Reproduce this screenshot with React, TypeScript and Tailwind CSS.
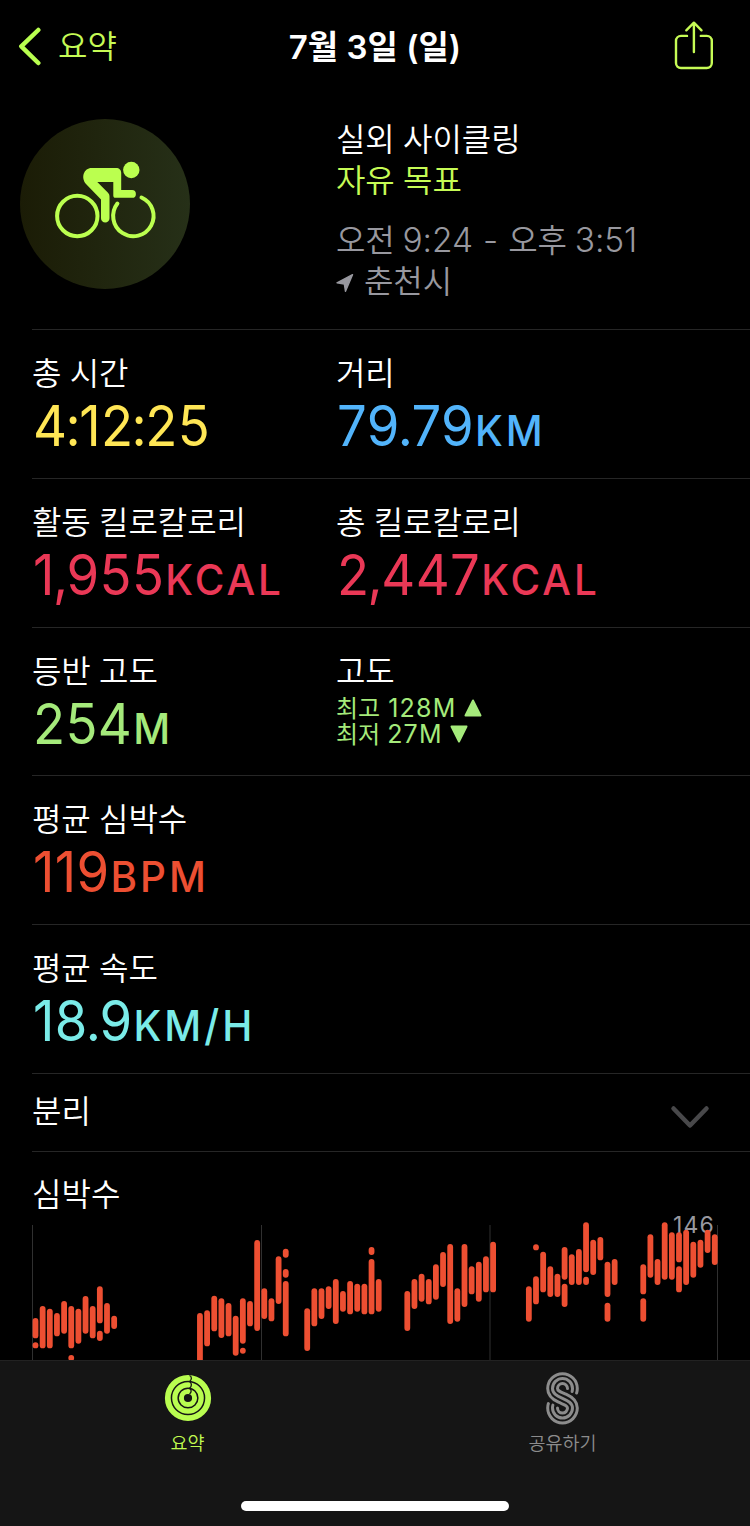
import React from 'react';

interface Metric {
  label: string;
  value: string;
  unit?: string;
  valueClass: string;
}

interface MetricRowProps {
  left: Metric;
  right?: Metric;
  children?: React.ReactNode;
}

// [슬롯 번호, 위쪽 y, 아래쪽 y]
type HeartBar = [number, number, number];

const HEART_BARS: HeartBar[] = [
  [0, 98, 118.3], [0, 122.3, 128.3], [1, 86, 128.3], [2, 88.7, 128.3], [3, 93, 116.3],
  [4, 81, 113.7], [5, 86, 128.3], [5, 135, 141], [6, 88.7, 123.7], [7, 76, 113.7],
  [8, 86, 118.3], [9, 66.3, 103.3], [9, 110.7, 121], [10, 83, 113.7], [11, 95.7, 109],

  [23, 93, 146], [24, 90.3, 126.3], [25, 75.7, 111.3], [26, 78.3, 118], [27, 83, 116.3],
  [28, 95.7, 135.7], [29, 78.3, 123.7], [29, 127.7, 133.7], [30, 81, 106.3], [31, 20, 111],
  [32, 68.3, 99], [33, 78.3, 101.3], [34, 36.3, 84], [35, 28.7, 37.7], [35, 49, 57.7],
  [35, 61, 116.3],

  [38, 88.3, 131], [39, 68.3, 106.3], [40, 68.3, 99], [41, 66.3, 89], [42, 59, 104],
  [43, 71, 91.7], [44, 61, 94.3], [45, 63.7, 91.7], [46, 63.7, 94.3], [47, 27, 35],
  [47, 39, 94.3], [48, 59, 91.7],

  [52, 71, 111], [53, 59, 89], [54, 53.7, 81.7], [55, 59, 84.3], [56, 44.3, 79.7],
  [57, 32, 67], [58, 24, 104], [59, 68.3, 101.7], [60, 24, 87], [61, 46.3, 74.3],
  [62, 41.7, 81.7], [63, 36.3, 72.3], [64, 21.7, 72.3],

  [69, 66.3, 101.7], [70, 24.3, 30.3], [70, 56.3, 84.3], [71, 31.7, 72.3], [72, 46.3, 77],
  [73, 53.7, 77], [74, 27, 59.7], [74, 63.7, 87], [75, 34.3, 65], [76, 29, 65],
  [77, 2.3, 52.3], [77, 56.7, 65], [78, 19.7, 55], [79, 17, 40.3], [80, 41.7, 77],
  [80, 82.7, 101.7], [81, 39, 65],

  [85, 44.3, 74.3], [85, 78.3, 101.7], [86, 14.3, 57.7], [87, 39, 65], [88, 2.3, 59.7],
  [89, 12.3, 59.7], [90, 12.3, 42.3], [90, 46.3, 72.3], [91, 9.7, 65], [92, 21.7, 57.7],
  [93, 19.7, 47.7], [94, 9.7, 33], [95, 14.3, 45],
];

const GRID_LINES = [32.5, 261.5, 490, 717.5];

const CyclingIcon: React.FC = () => (
  <svg className="w-[170px] h-[170px]" viewBox="20 119 170 170" fill="none">
    <circle cx="77.3" cy="216" r="20.2" stroke="#bbff4f" strokeWidth="4" />
    <path
      d="M141.5 197.5A20.2 20.2 0 1 1 117.4 203.6"
      stroke="#bbff4f"
      strokeWidth="4"
      strokeLinecap="round"
    />
    <circle cx="131.3" cy="170" r="8.2" fill="#bbff4f" />
    <path
      d="M91.5 168H116C119.3 168 121.2 170 121.2 173V190H132A3.9 3.9 0 0 1 132 197.8H115.5C114 197.8 113.3 197 113.3 195.5V182H97.3L108 192.8C109.1 194 109.5 195 109.5 196.7V218.3A4.2 4.2 0 0 1 101 218.3V199.5L86 184C80.5 177.5 84 168 91.5 168Z"
      fill="#bbff4f"
    />
  </svg>
);

const ShareIcon: React.FC = () => (
  <svg
    className="w-10 h-[50px]"
    viewBox="673.5 21 40 50"
    fill="none"
    stroke="#c6fb55"
    strokeWidth="2.4"
    strokeLinecap="round"
    strokeLinejoin="round"
  >
    <path d="M686.5 35.9H680.5A5 5 0 0 0 675.5 40.9V63A5 5 0 0 0 680.5 68H706.3A5 5 0 0 0 711.3 63V40.9A5 5 0 0 0 706.3 35.9H700.3" />
    <path d="M693.4 52V23M685.8 30.3L693.4 22.7L701 30.3" />
  </svg>
);

const RingsIcon: React.FC = () => (
  <svg className="w-12 h-12" viewBox="0 0 48 48" fill="none">
    <g stroke="#b9fd50">
      <circle cx="24" cy="24" r="20.2" strokeWidth="5.8" />
      <circle cx="24" cy="24" r="13.2" strokeWidth="5.2" />
      <circle cx="24" cy="24" r="6.6" strokeWidth="5" />
    </g>
    <path
      d="M25.5 1.5C28 2.5 28 6 25.5 7.5C28 9 28 12.5 25.5 14.3C27.7 15.5 27.7 18.5 25.5 20"
      stroke="#151515"
      strokeWidth="1.3"
    />
  </svg>
);

const SharingIcon: React.FC = () => (
  <svg
    className="w-[34px] h-[53px]"
    viewBox="35.5 12 34 53"
    fill="none"
    stroke="#8c8c8c"
    strokeWidth="3"
    strokeLinecap="round"
  >
    <path d="M66.1 33C66.6 31.6 66.8 30 66.8 28.5A14.8 14.8 0 0 0 37.2 28.5C37.2 36 42 39.5 48 42.2C54 44.9 57 45.6 57 48.1A5 5 0 0 1 47 48.1" />
    <path d="M61.6 31.5C61.9 30.5 62 29.5 62 28.5A10 10 0 0 0 42 28.5C42 33.5 46.5 35.8 52 38.3C57.5 40.8 62 43.100 62 48.1A10 10 0 0 1 42 48.100C42 47.1 42.1 46.1 42.4 45.100" />
    <path d="M57 28.5A5 5 0 0 0 47 28.5C47 31 50 31.7 56 34.4C62 37.1 66.8 40.6 66.8 48.1A14.8 14.8 0 0 1 37.200 48.100C37.2 46.6 37.4 45 37.9 43.6" />
  </svg>
);

const MetricLabel: React.FC<{ children: React.ReactNode }> = ({ children }) => (
  <div className="text-[32px] leading-10 font-[350] tracking-[-0.1px] [word-spacing:1.4px]">
    {children}
  </div>
);

const MetricCell: React.FC<{ metric: Metric }> = ({ metric }) => (
  <div>
    <MetricLabel>{metric.label}</MetricLabel>
    <div
      className={`mt-[9px] ml-px origin-left scale-x-94 font-['Inter',sans-serif] text-[56px] leading-[52px] font-normal tracking-[0.4px] whitespace-nowrap ${metric.valueClass}`}
    >
      {/* 구두점은 숫자 사이 간격을 더 좁힌다 */}
      {metric.value.split(/([:.,])/).map((part, i) => (
        <span key={i} className={i % 2 ? '-mx-[2px]' : undefined}>
          {part}
        </span>
      ))}
      {metric.unit && (
        <span className="ml-px text-[43px] font-[450] tracking-[3.2px]">{metric.unit}</span>
      )}
    </div>
  </div>
);

const MetricRow: React.FC<MetricRowProps> = ({ left, right, children }) => (
  <div className="ml-8 h-[148.8px] shrink-0 grid grid-cols-[304px_1fr] border-t border-[#262626] pt-[21px]">
    <MetricCell metric={left} />
    {right && <MetricCell metric={right} />}
    {children}
  </div>
);

const HeartRateChart: React.FC = () => (
  <svg className="block w-full h-[140px] overflow-visible" viewBox="0 0 750 140">
    {GRID_LINES.map((x) => (
      <rect key={x} x={x - 0.5} y="5" width="1" height="135" fill="#303030" />
    ))}
    <text
      x="673"
      y="13"
      fill="#98989f"
      className="font-['Inter',sans-serif] text-[23px] font-normal tracking-[1.2px]"
    >
      146
    </text>
    {HEART_BARS.map(([slot, top, bottom]) => (
      <rect
        key={`${slot}-${top}`}
        x={35.5 + slot * 7.15 - 2.9}
        y={top}
        width="5.8"
        height={bottom - top}
        rx="2.9"
        fill="#ed4f32"
      />
    ))}
  </svg>
);

export default function App() {
  return (
    <div className="w-[750px] h-[1526px] overflow-hidden flex flex-col bg-black text-white font-['Noto_Sans_CJK_KR',sans-serif]">
      {/* 상단 내비게이션 */}
      <header className="h-[92px] shrink-0 grid grid-cols-[1fr_auto_1fr] items-center px-[17px]">
        <button className="flex items-center gap-[17px] text-[#c6fb55]">
          <svg className="w-6 h-10" viewBox="0 0 24 40" fill="none">
            <path
              d="M21.3 4L4.3 20.3L21.3 37"
              stroke="#b9ff4f"
              strokeWidth="4.5"
              strokeLinecap="round"
              strokeLinejoin="round"
            />
          </svg>
          <span className="text-[32px] leading-10 font-[350] -mt-1">요약</span>
        </button>
        <h1 className="mt-0.5 font-['Inter','Noto_Sans_CJK_KR',sans-serif] text-[33px] leading-10 font-semibold">
          7월 3일 (일)
        </h1>
        <button className="justify-self-end mr-[19px]">
          <ShareIcon />
        </button>
      </header>

      {/* 운동 요약 */}
      <section className="h-[237px] shrink-0 grid grid-cols-[316px_1fr] pl-5 pt-[25px]">
        <div className="w-[170px] h-[170px] mt-0.5 rounded-full bg-linear-to-r from-[#1b1c06] to-[#263018]">
          <CyclingIcon />
        </div>
        <div className="text-[32px] leading-[40.5px] font-[350] tracking-[-0.1px] [word-spacing:1.4px]">
          <div>실외 사이클링</div>
          <div className="text-[#c6fb55]">자유 목표</div>
          <div className="mt-5 text-[#98989f] [word-spacing:0.8px]">
            오전 <span className="font-['Inter',sans-serif] text-[33.5px] leading-none">9:24 - </span>
            오후 <span className="font-['Inter',sans-serif] text-[33.5px] leading-none">3:51</span>
          </div>
          <div className="flex items-center gap-[10px] text-[#98989f]">
            <svg className="w-[18px] h-[18px] mt-2" viewBox="337 274 18 18">
              <path
                d="M353.5 274.700L338 282.8L345.3 284L346.5 291.3Z"
                fill="#98989f"
                stroke="#98989f"
                strokeWidth="1.4"
                strokeLinejoin="round"
              />
            </svg>
            춘천시
          </div>
        </div>
      </section>

      <MetricRow
        left={{ label: '총 시간', value: '4:12:25', valueClass: 'text-[#ffe655]' }}
        right={{ label: '거리', value: '79.79', unit: 'KM', valueClass: 'text-[#52b4fb]' }}
      />
      <MetricRow
        left={{ label: '활동 킬로칼로리', value: '1,955', unit: 'KCAL', valueClass: 'text-[#ea3856]' }}
        right={{ label: '총 킬로칼로리', value: '2,447', unit: 'KCAL', valueClass: 'text-[#ea3856]' }}
      />
      <MetricRow left={{ label: '등반 고도', value: '254', unit: 'M', valueClass: 'text-[#a5ea7b]' }}>
        <div>
          <MetricLabel>고도</MetricLabel>
          <div className="mt-1.5 text-[24px] leading-[26px] text-[#a5ea7b]">
            <div className="flex items-center gap-2">
              <span className="-mt-0.5">최고</span>
              <span className="font-['Inter',sans-serif] text-[25px] tracking-[1.2px]">128M</span>
              <svg className="w-[18px] h-[18px]" viewBox="0 0 18 18">
                <path d="M9 1.5L16.5 16.5H1.5Z" fill="#a5ea7b" stroke="#a5ea7b" strokeWidth="2" strokeLinejoin="round" />
              </svg>
            </div>
            <div className="flex items-center gap-[7px]">
              <span className="-mt-0.5">최저</span>
              <span className="font-['Inter',sans-serif] text-[25px] tracking-[1.2px]">27M</span>
              <svg className="w-[18px] h-[18px]" viewBox="0 0 18 18">
                <path d="M9 16.5L16.5 1.5H1.5Z" fill="#a5ea7b" stroke="#a5ea7b" strokeWidth="2" strokeLinejoin="round" />
              </svg>
            </div>
          </div>
        </div>
      </MetricRow>
      <MetricRow left={{ label: '평균 심박수', value: '119', unit: 'BPM', valueClass: 'text-[#ed4f32]' }} />
      <MetricRow left={{ label: '평균 속도', value: '18.9', unit: 'KM/H', valueClass: 'text-[#7aebe8]' }} />

      {/* 분리 */}
      <div className="ml-8 h-[79px] shrink-0 flex items-start justify-between border-y border-[#262626] pr-10">
        <span className="mt-[15px] text-[32px] leading-10 font-[350]">분리</span>
        <svg className="w-10 h-6 mt-[31px]" viewBox="0 0 40 24" fill="none">
          <path
            d="M3.5 3.5L20 20.5L36.5 3.5"
            stroke="#48484a"
            strokeWidth="4.5"
            strokeLinecap="round"
            strokeLinejoin="round"
          />
        </svg>
      </div>

      {/* 심박수 그래프 */}
      <section className="h-[208px] shrink-0 overflow-hidden">
        <h2 className="pl-8 pt-5 h-[68px] text-[32px] leading-10 font-[350]">심박수</h2>
        <HeartRateChart />
      </section>

      {/* 하단 탭 바 */}
      <nav className="h-[166px] shrink-0 flex flex-col border-t border-[#222222] bg-[#151515]">
        <div className="grid grid-cols-2 h-[136px] text-[18.5px] leading-6 font-[350]">
          <button className="flex flex-col items-center justify-start pt-[13px] text-[#c0fa50]">
            <RingsIcon />
            <span className="mt-2">요약</span>
          </button>
          <button className="flex flex-col items-center justify-start pt-[11px] text-[#8c8c8c]">
            <SharingIcon />
            <span className="mt-[5px]">공유하기</span>
          </button>
        </div>
        <div className="mt-[4px] mx-auto w-[268px] h-[10px] rounded-full bg-white" />
      </nav>
    </div>
  );
}
